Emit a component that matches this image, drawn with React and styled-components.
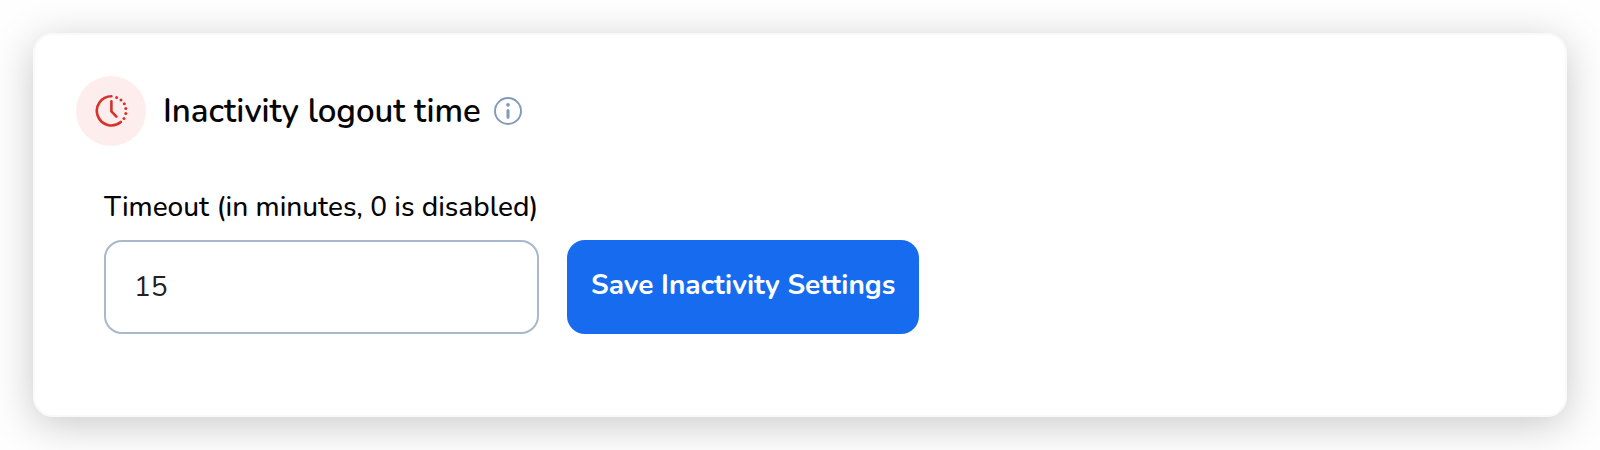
import React, { useState } from "react";
import styled, { createGlobalStyle } from "styled-components";

const colors = {
  BLACK: "#050505",
  BLUE: "#176bee",
  BORDER: "#a9b8cb",
  MUTED: "#8399b9",
  RED: "#d8302a",
  RED_LIGHT: "#fdeeed",
  WHITE: "#ffffff",
};

const App = () => {
  const [timeout, setTimeout] = useState("15");

  return (
    <>
      <GlobalStyle />
      <Page>
        <Card>
          <Header>
            <IconCircle>
              <TimerIcon />
            </IconCircle>
            <Heading>Inactivity logout time</Heading>
            <InfoButton type="button" aria-label="About inactivity logout time">
              <InfoIcon />
            </InfoButton>
          </Header>
          <Form onSubmit={(event) => event.preventDefault()}>
            <Field>
              <Label htmlFor="timeout">Timeout (in minutes, 0 is disabled)</Label>
              <Input
                id="timeout"
                name="timeout"
                type="text"
                inputMode="numeric"
                value={timeout}
                onChange={(event) => setTimeout(event.target.value)}
              />
            </Field>
            <Button type="submit">Save Inactivity Settings</Button>
          </Form>
        </Card>
      </Page>
    </>
  );
};

const TimerIcon = () => (
  <svg width="34" height="34" viewBox="0 0 34 34" fill="none" aria-hidden="true">
    <g stroke={colors.RED} strokeWidth="2.6" strokeLinecap="round">
      <path d="M17.4 2.2A14.6 14.6 0 1 0 26.8 28" />
      <path d="M17.4 7.4v10l5 5.2" strokeLinejoin="round" />
    </g>
    <g fill={colors.RED}>
      <circle cx="22.6" cy="3.4" r="1.5" />
      <circle cx="27" cy="6" r="1.5" />
      <circle cx="30.3" cy="9.8" r="1.5" />
      <circle cx="31.8" cy="14.6" r="1.5" />
      <circle cx="31.8" cy="19.6" r="1.5" />
      <circle cx="30" cy="24.4" r="1.5" />
    </g>
  </svg>
);

const InfoIcon = () => (
  <svg width="28" height="28" viewBox="0 0 28 28" fill="none" aria-hidden="true">
    <circle cx="14" cy="14" r="13" stroke={colors.MUTED} strokeWidth="1.9" />
    <circle cx="14" cy="7.8" r="1.9" fill={colors.MUTED} />
    <path
      d="M14 13.6v6.6"
      stroke={colors.MUTED}
      strokeWidth="3"
      strokeLinecap="round"
    />
  </svg>
);

const GlobalStyle = createGlobalStyle`
  * {
    box-sizing: border-box;
  }

  body {
    background: #fefefe;
    color: ${colors.BLACK};
    font-family: Nunito, "Open Sans", "Noto Sans", sans-serif;
    font-variant-ligatures: none;
    margin: 0;
  }
`;

const Page = styled.main`
  padding: 33px;
`;

const Card = styled.section`
  background: ${colors.WHITE};
  border: 2px solid #f8f9fa;
  border-radius: 20px;
  box-shadow: 0 8px 40px rgba(0, 0, 0, 0.21);
  padding: 41px 41px 81px;
`;

const Header = styled.header`
  align-items: center;
  display: flex;
  margin-bottom: 42px;
`;

const IconCircle = styled.div`
  align-items: center;
  background: ${colors.RED_LIGHT};
  border-radius: 50%;
  display: flex;
  flex: none;
  height: 70px;
  justify-content: center;
  margin-right: 17px;
  width: 70px;
`;

const Heading = styled.h2`
  font-size: 33px;
  font-weight: 600;
  line-height: 40px;
  margin: 0 13px 0 0;
  padding-top: 2px;
`;

const InfoButton = styled.button`
  background: none;
  border: none;
  cursor: pointer;
  display: flex;
  padding: 0;
`;

const Form = styled.form`
  align-items: flex-end;
  display: flex;
  gap: 28px;
  padding-left: 28px;
`;

const Field = styled.div`
  display: flex;
  flex-direction: column;
  gap: 14px;
  width: 435px;
`;

const Label = styled.label`
  font-size: 28px;
  font-weight: 500;
  line-height: 38px;
  white-space: nowrap;
`;

const Input = styled.input`
  background: ${colors.WHITE};
  border: 2px solid ${colors.BORDER};
  border-radius: 18px;
  color: #222222;
  font-family: inherit;
  font-size: 28px;
  height: 94px;
  padding: 0 28px;
  width: 100%;
`;

const Button = styled.button`
  background: ${colors.BLUE};
  border: none;
  border-radius: 18px;
  color: ${colors.WHITE};
  cursor: pointer;
  font-family: inherit;
  font-size: 28px;
  font-variant-ligatures: inherit;
  font-weight: 700;
  height: 94px;
  padding: 0 24px 4px;
  white-space: nowrap;
`;

export default App;
